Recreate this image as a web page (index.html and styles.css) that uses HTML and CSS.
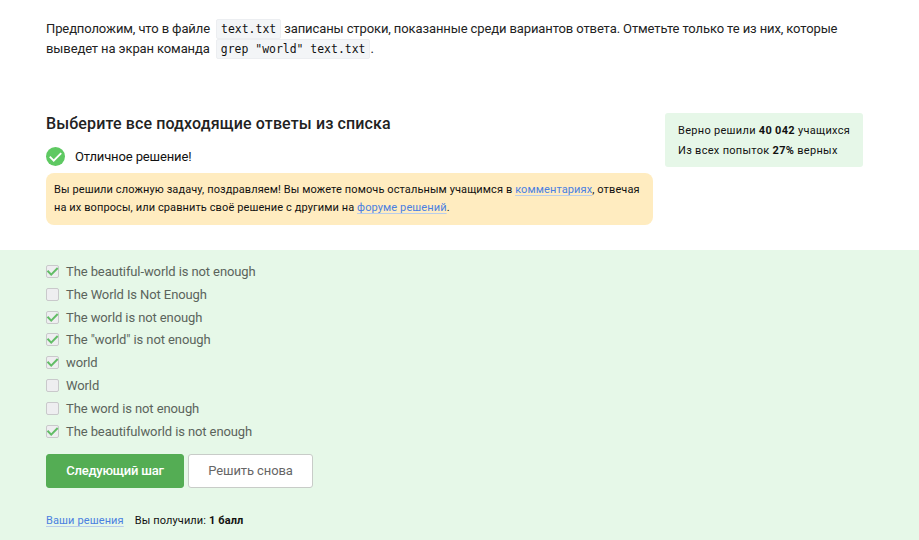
FILE: index.html
```html
<!DOCTYPE html>
<html lang="ru">
<head>
<meta charset="utf-8">
<title>Выберите все подходящие ответы из списка</title>
<link rel="stylesheet" href="styles.css">
</head>
<body>
<main>
  <p class="task">Предположим, что в файле <code>text.txt</code> записаны строки, показанные среди вариантов ответа. Отметьте только те из них, которые<br>выведет на экран команда <code>grep "world" text.txt</code>.</p>
  <section class="head">
    <div class="head-main">
      <h1>Выберите все подходящие ответы из списка</h1>
      <div class="status">
        <svg width="19" height="19" viewBox="0 0 20 20"><circle cx="10" cy="10" r="10" fill="#5ec962"/><path d="M4 10.2l4.1 4.1L16 6.4" fill="none" stroke="#fff" stroke-width="2"/></svg>
        <span>Отличное решение!</span>
      </div>
      <div class="hint">Вы решили сложную задачу, поздравляем! Вы можете помочь остальным учащимся в <a>комментариях</a>, отвечая<br>на их вопросы, или сравнить своё решение с другими на <a>форуме решений</a>.</div>
    </div>
    <aside class="stats">
      <div>Верно решили <b>40 042</b> учащихся</div>
      <div>Из всех попыток <b>27%</b> верных</div>
    </aside>
  </section>
</main>
<section class="quiz">
  <ul>
    <li><i class="box"><svg viewBox="0 0 13 13"><path d="M1.5 5.8l3.7 3.8L11.7 3"/></svg></i><span>The beautiful-world is not enough</span></li>
    <li><i class="box"></i><span>The World Is Not Enough</span></li>
    <li><i class="box"><svg viewBox="0 0 13 13"><path d="M1.5 5.8l3.7 3.8L11.7 3"/></svg></i><span>The world is not enough</span></li>
    <li><i class="box"><svg viewBox="0 0 13 13"><path d="M1.5 5.8l3.7 3.8L11.7 3"/></svg></i><span>The "world" is not enough</span></li>
    <li><i class="box"><svg viewBox="0 0 13 13"><path d="M1.5 5.8l3.7 3.8L11.7 3"/></svg></i><span>world</span></li>
    <li><i class="box"></i><span>World</span></li>
    <li><i class="box"></i><span>The word is not enough</span></li>
    <li><i class="box"><svg viewBox="0 0 13 13"><path d="M1.5 5.8l3.7 3.8L11.7 3"/></svg></i><span>The beautifulworld is not enough</span></li>
  </ul>
  <div class="actions"><button class="next">Следующий шаг</button><button class="again">Решить снова</button></div>
  <div class="foot"><a>Ваши решения</a><span>Вы получили: <b>1 балл</b></span></div>
</section>
</body>
</html>
```
FILE: styles.css
```css
* { box-sizing: border-box; }
body { margin: 0; width: 919px; height: 540px; overflow: hidden; background: #fff; color: #111; font-family: Roboto, "Liberation Sans", sans-serif; display: flex; flex-direction: column; }
main { height: 250px; flex: none; padding: 19px 56px 0 46px; }
.task { margin: 0; height: 94px; font-size: 13px; line-height: 20px; letter-spacing: -0.11px; color: #222; white-space: nowrap; }
code { font-family: "DejaVu Sans Mono", monospace; font-size: 11.45px; line-height: 18px; letter-spacing: 0; display: inline-block; height: 20px; padding: 0 4px; margin-left: 3px; color: #111; background: #f3f5f7; border: 1px solid #eceef1; border-radius: 2px; vertical-align: top; }
.head { display: flex; justify-content: space-between; align-items: flex-start; }
.head-main { width: 607px; }
h1 { margin: 0; font-size: 16px; line-height: 21px; font-weight: 500; letter-spacing: 0.125px; color: #222; white-space: nowrap; }
.status { display: flex; align-items: center; gap: 10px; height: 19px; margin-top: 13px; font-size: 13px; line-height: 19px; letter-spacing: -0.13px; color: #111; }
.hint { margin-top: 7px; height: 52px; padding: 8px 8px 0; border-radius: 8px; background: #ffecc0; font-size: 11px; line-height: 18px; letter-spacing: 0.105px; white-space: nowrap; }
a { color: #4a80e0; text-decoration: underline 1px #b9cdea; text-underline-offset: 2px; text-decoration-skip-ink: none; }
.stats { width: 198px; height: 54px; padding: 8px 13px 0; border-radius: 3px; background: #e6f7e8; font-size: 11px; line-height: 20px; letter-spacing: 0.3px; white-space: nowrap; }
b { font-weight: 700; }
.quiz { flex: 1; padding: 10px 46px 0; background: #e6f8e8; }
ul { list-style: none; margin: 0; padding: 0; }
li { display: flex; align-items: center; gap: 7px; height: 22.84px; font-size: 13px; letter-spacing: -0.1px; color: #5b645c; white-space: nowrap; }
.box { width: 13px; height: 13px; border: 1px solid #c9c9cb; border-radius: 2px; background: #eeeef0; display: block; }
.box svg { display: block; width: 13px; height: 13px; margin: -1px; }
.box path { fill: none; stroke: #62bd66; stroke-width: 2; }
.actions { display: flex; gap: 4px; margin-top: 11.28px; }
button { height: 34px; padding: 0; border: 1px solid #54ad54; border-radius: 3px; font: 13px Roboto, sans-serif; white-space: nowrap; }
.next { width: 138px; background: #54ad54; color: #fff; font-weight: 500; letter-spacing: -0.2px; }
.again { width: 125px; background: #fff; border-color: #c8ccc8; color: #666; letter-spacing: -0.1px; }
.foot { display: flex; gap: 11px; margin-top: 26px; font-size: 11px; line-height: 13px; letter-spacing: 0.12px; white-space: nowrap; }
```
